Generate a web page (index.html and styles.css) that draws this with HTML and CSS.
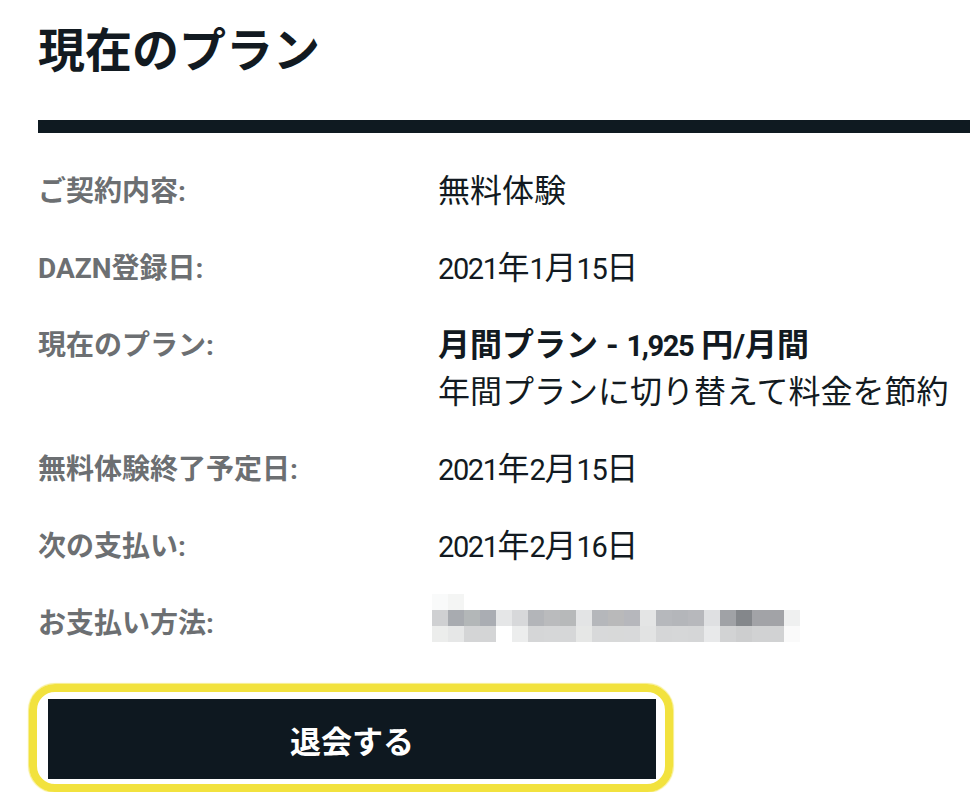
FILE: index.html
```html
<!DOCTYPE html>
<html lang="ja">
<head>
    <meta charset="UTF-8">
    <meta name="viewport" content="width=device-width, initial-scale=1.0">
    <title>現在のプラン</title>
    <link rel="stylesheet" href="styles.css">
</head>
<body>
    <div class="plan">
        <h1 class="plan-title">現在のプラン</h1>
        <div class="plan-rule"></div>

        <div class="plan-list">
            <div class="plan-row">
                <div class="plan-label">ご契約内容:</div>
                <div class="plan-value">無料体験</div>
            </div>
            <div class="plan-row">
                <div class="plan-label">DAZN登録日:</div>
                <div class="plan-value"><span class="num">2021</span>年<span class="num">1</span>月<span class="num">15</span>日</div>
            </div>
            <div class="plan-row">
                <div class="plan-label">現在のプラン:</div>
                <div class="plan-value">
                    <strong>月間プラン - <span class="num">1,925</span> 円/月間</strong><br>
                    年間プランに切り替えて料金を節約
                </div>
            </div>
            <div class="plan-row">
                <div class="plan-label">無料体験終了予定日:</div>
                <div class="plan-value"><span class="num">2021</span>年<span class="num">2</span>月<span class="num">15</span>日</div>
            </div>
            <div class="plan-row">
                <div class="plan-label">次の支払い:</div>
                <div class="plan-value"><span class="num">2021</span>年<span class="num">2</span>月<span class="num">16</span>日</div>
            </div>
            <div class="plan-row">
                <div class="plan-label">お支払い方法:</div>
                <div class="plan-value">
                    <div class="mosaic" id="mosaic"></div>
                </div>
            </div>
        </div>

        <div class="highlight">
            <button class="cancel-btn">退会する</button>
        </div>
    </div>

    <script>
        // ぼかしたカード番号 (16px のマス)
        const mosaicRows = [
            ['#f9fafa', '#f4f5f4'],
            ['#cfd0d2', '#a8abb0', '#b3b7b8', '#aaadb3', '#e5e6e7', '#d7d8da', '#b3b5b9', '#babbbd',
             '#b7b9ba', '#e3e4e5', '#b5b7bb', '#b9b9ba', '#b6b7bc', '#e4e5e5', '#b6b8bc', '#b4b6ba',
             '#b7b8bc', '#dfe0e2', '#a0a2a6', '#84878b', '#a2a3a7', '#a2a3a7', '#eff0f0'],
            ['#ecedec', '#e6e7e7', '#d4d5d6', '#d4d5d6', '#ffffff', '#eceded', '#d5d6d7', '#d6d7d8',
             '#d6d7d8', '#e6e7e6', '#d8d9da', '#d8d9d9', '#d8d9da', '#e2e3e3', '#d5d6d7', '#d6d7d8',
             '#d5d6d7', '#e8e9ea', '#d2d3d4', '#cdcecf', '#d1d2d3', '#d1d2d3', '#fafafa']
        ];

        const mosaic = document.getElementById('mosaic');
        mosaicRows.forEach(colors => {
            const row = document.createElement('div');
            row.className = 'mosaic-row';
            colors.forEach(c => {
                const cell = document.createElement('span');
                cell.className = 'mosaic-cell';
                cell.style.background = c;
                row.appendChild(cell);
            });
            mosaic.appendChild(row);
        });
    </script>
</body>
</html>
```

FILE: styles.css
```css
body {
    margin: 0;
    background-color: #fff;
    color: #121a21;
    font-family: Roboto, "Noto Sans CJK JP", sans-serif;
    overflow: hidden;
}
.plan {
    padding-left: 38px;
}
.plan-title {
    margin: 19px 0 0;
    font-size: 47px;
    line-height: 64px;
    font-weight: bold;
}
.plan-rule {
    height: 13px;
    margin-top: 37px;
    background-color: #0f1a21;
}
.plan-list {
    padding-top: 20px;
}
.plan-row {
    display: grid;
    grid-template-columns: 400px 1fr;
    padding: 15px 0;
    line-height: 47px;
}
.plan-label {
    font-size: 28px;
    font-weight: bold;
    color: #6c6f72;
}
.plan-value {
    font-size: 32px;
}
.plan-value strong {
    font-weight: bold;
}
/* 数字は細めの書体に近づける */
.num {
    font-size: 29px;
    line-height: 1;
    letter-spacing: -1.4px;
}
.mosaic {
    margin: -6px 0 0 -6px;
}
.mosaic-row {
    display: flex;
    height: 16px;
}
.mosaic-cell {
    width: 16px;
    height: 16px;
}
.highlight {
    width: 608px;
    margin: 22px 0 0 -9px;
    padding: 7px 9px 5px 11px;
    border: 8px solid #f2e23e;
    border-radius: 26px;
    box-shadow: 0 0 1px 1px rgba(242, 226, 62, 0.6);
}
.cancel-btn {
    display: block;
    width: 100%;
    height: 80px;
    border: none;
    background-color: #0e1820;
    color: #fff;
    font-family: Roboto, "Noto Sans CJK JP", sans-serif;
    font-size: 31px;
    font-weight: bold;
    cursor: pointer;
}
```
